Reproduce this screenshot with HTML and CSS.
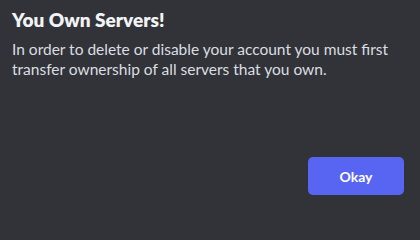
FILE: index.html
```html
<!DOCTYPE html>
<html>
<head>
<meta charset="utf-8">
<link rel="stylesheet" href="styles.css">
</head>
<body>
<div class="modal">
  <div class="content">
    <h1 class="title">You Own Servers!</h1>
    <p class="body">In order to delete or disable your account you must first transfer ownership of all servers that you own.</p>
  </div>
  <div class="footer">
    <button class="btn">Okay</button>
  </div>
</div>
</body>
</html>
```
FILE: styles.css
```css
html, body {
  margin: 0;
  padding: 0;
  background: #313338;
}
.modal {
  width: 420px;
  height: 210px;
  box-sizing: border-box;
  display: flex;
  flex-direction: column;
  justify-content: space-between;
  font-family: "Lato", sans-serif;
}
.content {
  padding: 8px 8px 0 12px;
}
.title {
  margin: 0;
  font-size: 19px;
  line-height: 24px;
  font-weight: 800;
  color: #f2f3f5;
}
.body {
  margin: 7px 0 0;
  font-size: 15.5px;
  line-height: 20px;
  color: #dbdee1;
}
.footer {
  display: flex;
  justify-content: flex-end;
  padding: 0 16px 15px;
}
.btn {
  width: 96px;
  height: 38px;
  border: 0;
  border-radius: 5px;
  background: #5865f2;
  color: #fff;
  font-family: "Lato", sans-serif;
  font-size: 14px;
  font-weight: 700;
}
```
